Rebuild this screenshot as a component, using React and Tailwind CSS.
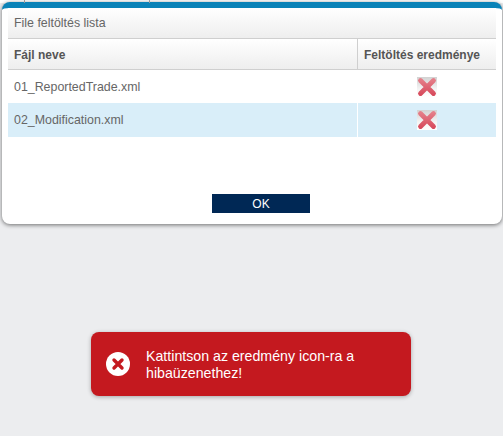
const XIcon = () => (
  <svg width="20" height="20" viewBox="0 0 20 20">
    <defs>
      <linearGradient id="xBack" x1="0" y1="0" x2="0" y2="1">
        <stop offset="0" stopColor="#d2d2d2" />
        <stop offset="0.6" stopColor="#f4f4f4" />
        <stop offset="1" stopColor="#ffffff" />
      </linearGradient>
      <linearGradient id="xRed" gradientUnits="userSpaceOnUse" x1="0" y1="2" x2="0" y2="18">
        <stop offset="0" stopColor="#e5808a" />
        <stop offset="1" stopColor="#d74a5c" />
      </linearGradient>
    </defs>
    <rect width="20" height="20" fill="url(#xBack)" />
    <path d="M3.5 3.5 L16.5 16.5 M16.5 3.5 L3.5 16.5" stroke="url(#xRed)" strokeWidth="4.8" strokeLinecap="round" />
  </svg>
);

const rows = [
  { name: "01_ReportedTrade.xml", height: "h-[33px] pt-[1px]", bg: "bg-white" },
  { name: "02_Modification.xml", height: "h-[34px]", bg: "bg-[#d9eef9]" },
];

export default function App() {
  return (
    <div className="relative h-[436px] w-[503px] overflow-hidden bg-[#ecedef] font-['Liberation_Sans',Arial,sans-serif]">
      {/* page behind the modal */}
      <div className="flex h-[3px] bg-white">
        <div className="w-[25px] border-r border-[#999]" />
        <div className="w-[125px] border-r border-[#999]" />
      </div>

      {/* modal */}
      <div className="ml-[2px] mr-[1px] -mt-[1px] flex h-[222px] flex-col rounded-[8px] border-t-[6px] border-[#0a83b8] bg-white pl-[6px] pr-[6px] shadow-[0_1px_4px_rgba(0,0,0,0.55)]">
        <div className="flex h-[31px] items-center border-b border-[#cfcfcf] bg-gradient-to-b from-white to-[#eeeeee] px-[6px] pt-[1px] text-[12.4px] text-[#666]">
          File feltöltés lista
        </div>
        <div className="flex h-[31px] border-b border-[#cfcfcf] bg-gradient-to-b from-white to-[#eeeeee] text-[12px] font-bold text-[#555]">
          <div className="flex flex-1 items-center border-r border-[#cfcfcf] px-[6px] pt-[2px]">Fájl neve</div>
          <div className="flex w-[138px] items-center px-[6px] pt-[2px]">Feltöltés eredménye</div>
        </div>
        {rows.map((row) => (
          <div key={row.name} className={`flex text-[12.4px] text-[#666] ${row.height} ${row.bg}`}>
            <div className="flex flex-1 items-center border-r border-white px-[6px]">{row.name}</div>
            <div className="flex w-[138px] items-center justify-center">
              <XIcon />
            </div>
          </div>
        ))}
        <div className="mt-auto flex justify-center pb-[11px] pl-[18px]">
          <button className="h-[19px] w-[98px] bg-[#002855] text-[12px] text-white">OK</button>
        </div>
      </div>

      {/* error toast */}
      <div className="absolute left-[91px] top-[332px] flex h-[64px] w-[320px] items-center gap-[16px] rounded-[8px] bg-[#c4191f] pl-[15px] pr-[20px] pt-[2px] text-[14.2px] leading-[17px] text-white shadow-[0_1px_4px_rgba(0,0,0,0.3)]">
        <svg width="24" height="24" viewBox="0 0 24 24" className="shrink-0 -mt-[2px]">
          <circle cx="12" cy="12" r="12" fill="white" />
          <path d="M8 8 L16 16 M16 8 L8 16" stroke="#c4191f" strokeWidth="3.4" strokeLinecap="round" />
        </svg>
        <span>Kattintson az eredmény icon-ra a hibaüzenethez!</span>
      </div>
    </div>
  );
}
